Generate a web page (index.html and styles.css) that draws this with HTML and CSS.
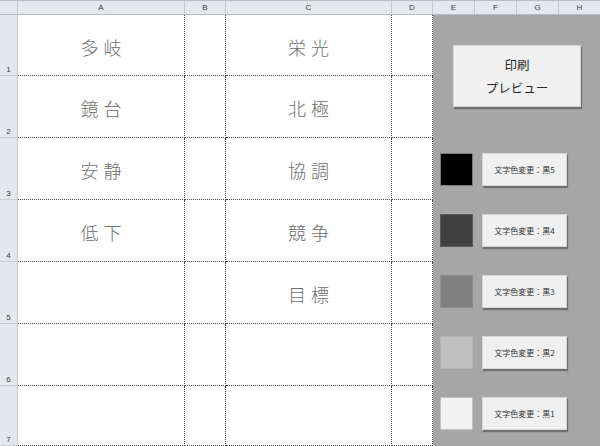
FILE: index.html
```html
<!DOCTYPE html>
<html>
<head>
    <meta charset="utf-8">
    <link rel="stylesheet" href="styles.css">
</head>
<body>
    <div class="sheet">
        <div class="corner"></div>
        <div class="col-head">A</div>
        <div class="col-head">B</div>
        <div class="col-head">C</div>
        <div class="col-head">D</div>
        <div class="col-head col-head-group">
            <span>E</span><span>F</span><span>G</span><span>H</span>
        </div>

        <div class="row-head">1</div>
        <div class="cell word">多岐</div>
        <div class="cell"></div>
        <div class="cell word">栄光</div>
        <div class="cell cell-last"></div>

        <div class="panel">
            <div class="btn btn-print">
                <span>印刷</span>
                <span>プレビュー</span>
            </div>
            <div class="color-list">
                <div class="color-row">
                    <div class="swatch swatch-5"></div>
                    <div class="btn btn-color">文字色変更：黒5</div>
                </div>
                <div class="color-row">
                    <div class="swatch swatch-4"></div>
                    <div class="btn btn-color">文字色変更：黒4</div>
                </div>
                <div class="color-row">
                    <div class="swatch swatch-3"></div>
                    <div class="btn btn-color">文字色変更：黒3</div>
                </div>
                <div class="color-row">
                    <div class="swatch swatch-2"></div>
                    <div class="btn btn-color">文字色変更：黒2</div>
                </div>
                <div class="color-row">
                    <div class="swatch swatch-1"></div>
                    <div class="btn btn-color">文字色変更：黒1</div>
                </div>
            </div>
        </div>

        <div class="row-head">2</div>
        <div class="cell word">鏡台</div>
        <div class="cell"></div>
        <div class="cell word">北極</div>
        <div class="cell cell-last"></div>

        <div class="row-head">3</div>
        <div class="cell word">安静</div>
        <div class="cell"></div>
        <div class="cell word">協調</div>
        <div class="cell cell-last"></div>

        <div class="row-head">4</div>
        <div class="cell word">低下</div>
        <div class="cell"></div>
        <div class="cell word">競争</div>
        <div class="cell cell-last"></div>

        <div class="row-head">5</div>
        <div class="cell word"></div>
        <div class="cell"></div>
        <div class="cell word">目標</div>
        <div class="cell cell-last"></div>

        <div class="row-head">6</div>
        <div class="cell"></div>
        <div class="cell"></div>
        <div class="cell"></div>
        <div class="cell cell-last"></div>

        <div class="row-head">7</div>
        <div class="cell"></div>
        <div class="cell"></div>
        <div class="cell"></div>
        <div class="cell cell-last"></div>
    </div>
</body>
</html>
```

FILE: styles.css
```css
/* worksheet look */

html, body {
    margin: 0;
    padding: 0;
    overflow: hidden;
}

body {
    font-family: "Liberation Sans", "Noto Sans CJK JP", sans-serif;
    background-color: #ffffff;
}

.sheet {
    width: 600px;
    height: 446px;
    display: grid;
    grid-template-columns: 18px 167px 41px 166px 41px 1fr;
    grid-template-rows: 14px 61px repeat(5, 62px) 1fr;
    border-top: 1px solid #b9bec6;
    box-sizing: border-box;
}

.corner {
    background-color: #e4e7ec;
    border-right: 1px solid #c3c8d0;
    border-bottom: 1px solid #b6bcc5;
}

.col-head {
    background-color: #e4e7ec;
    border-right: 1px solid #c3c8d0;
    border-bottom: 1px solid #b6bcc5;
    font-size: 8px;
    color: #3a3a3a;
    text-align: center;
    line-height: 13px;
}

.col-head-group {
    display: flex;
    border-right: none;
}

.col-head-group span {
    flex: 1;
    border-right: 1px solid #c3c8d0;
}

.col-head-group span:last-child {
    border-right: none;
}

.row-head {
    background-color: #e4e7ec;
    border-right: 1px solid #c3c8d0;
    border-bottom: 1px solid #c8cdd5;
    font-size: 8px;
    color: #3a3a3a;
    display: flex;
    align-items: flex-end;
    justify-content: center;
    padding-bottom: 1px;
    box-sizing: border-box;
}

.cell {
    border-right: 1px dotted #4a4a4a;
    border-bottom: 1px dotted #4a4a4a;
}

.word {
    display: flex;
    align-items: center;
    justify-content: center;
    padding: 3px 0 0 5px;
    font-family: "Noto Sans CJK JP", sans-serif;
    font-weight: 300;
    font-size: 18px;
    letter-spacing: 5px;
    color: #6e6e6e;
}

.panel {
    grid-column: 6;
    grid-row: 2 / -1;
    background-color: #a6a6a6;
    padding: 30px 0 0 7px;
    display: flex;
    flex-direction: column;
}

.btn {
    background-color: #f0f0f0;
    border: 1px solid #d6d6d6;
    box-shadow: 1px 2px 1px #6f6f6f;
    color: #262626;
    box-sizing: border-box;
}

.btn-print {
    margin-left: 13px;
    width: 128px;
    height: 62px;
    display: flex;
    flex-direction: column;
    align-items: center;
    justify-content: center;
    gap: 7px;
    font-family: "Noto Sans CJK JP", sans-serif;
    font-size: 12.5px;
    line-height: 16px;
}

.color-list {
    margin-top: 46px;
    display: flex;
    flex-direction: column;
    gap: 28px;
}

.color-row {
    display: flex;
    align-items: center;
    gap: 9px;
}

.swatch {
    width: 33px;
    height: 33px;
    box-sizing: border-box;
    border: 1px solid #7a7a7a;
}

.swatch-5 { background-color: #000000; }
.swatch-4 { background-color: #404040; border-color: #5a5a5a; }
.swatch-3 { background-color: #808080; border-color: #8c8c8c; }
.swatch-2 { background-color: #bfbfbf; border-color: #b4b4b4; }
.swatch-1 { background-color: #f2f2f2; border-color: #c0c0c0; }

.btn-color {
    width: 85px;
    height: 33px;
    display: flex;
    align-items: center;
    justify-content: center;
    font-family: "Noto Sans CJK JP", sans-serif;
    font-size: 8px;
    color: #333333;
}
```
